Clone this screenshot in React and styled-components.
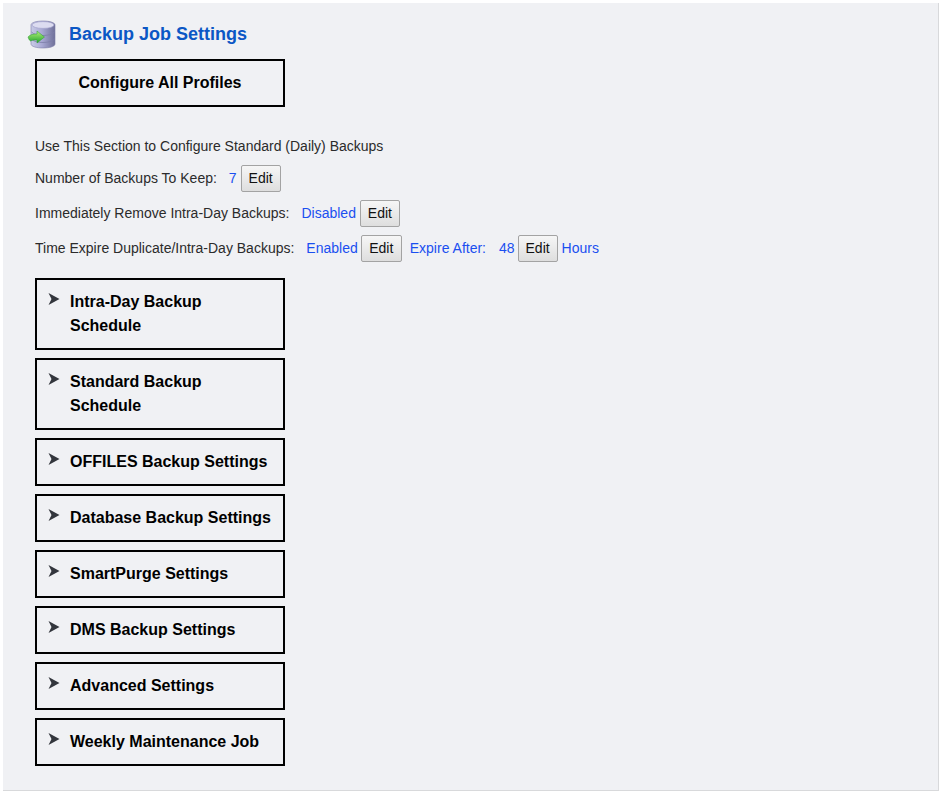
import React from 'react';
import styled, { createGlobalStyle } from 'styled-components';

const GlobalStyle = createGlobalStyle`
  html, body {
    margin: 0;
    padding: 0;
    background: #fff;
  }
  body {
    font-family: "Liberation Sans", Arial, sans-serif;
  }
`;

const Page = styled.div`
  width: 943px;
  height: 791px;
  padding: 3px 4px 0 3px;
  box-sizing: border-box;
`;

const Panel = styled.main`
  height: 788px;
  box-sizing: border-box;
  background: #f0f1f4;
  border-right: 1px solid #d8d9db;
  border-bottom: 1px solid #d8d9db;
  padding: 15px 0 0 24px;
`;

const TitleRow = styled.div`
  display: flex;
  align-items: center;
  height: 32px;
`;

const Title = styled.h2`
  margin: 0 0 0 12px;
  font-size: 18px;
  font-weight: bold;
  color: #0b57c5;
  line-height: 32px;
`;

const Content = styled.div`
  margin: 9px 0 0 8px;
`;

const ConfigureBox = styled.div`
  width: 250px;
  height: 48px;
  box-sizing: border-box;
  border: 2px solid #000;
  display: flex;
  align-items: center;
  justify-content: center;
  font-size: 16px;
  font-weight: bold;
  color: #000;
`;

const Settings = styled.section`
  margin-top: 27px;
  font-size: 14px;
  color: #2b2b2b;
`;

const Row = styled.div`
  display: flex;
  align-items: flex-start;
  height: 27px;
  line-height: 27px;
  margin-bottom: 8px;
`;

const Intro = styled(Row)`
  height: 24px;
  line-height: 24px;
  margin-bottom: 7px;
`;

const Value = styled.span`
  color: #1a4ff0;
  margin-left: ${(p) => p.$gap || 0}px;
`;

const EditButton = styled.button`
  width: ${(p) => p.$w || 40}px;
  height: 27px;
  margin-left: ${(p) => p.$gap || 4}px;
  padding: 0 0 2px;
  box-sizing: border-box;
  border: 1px solid #a3a3a3;
  border-radius: 2px;
  background: linear-gradient(#f6f6f6, #dedede);
  font-family: "Liberation Sans", Arial, sans-serif;
  font-size: 14px;
  color: #111;
`;

const Sections = styled.div`
  display: flex;
  flex-direction: column;
  gap: 8px;
  margin-top: 16px;
`;

const SectionBox = styled.div`
  width: 250px;
  box-sizing: border-box;
  border: 2px solid #000;
  padding: 10px 0 10px 11px;
  display: flex;
  align-items: flex-start;
`;

const Arrow = styled.svg`
  width: 12px;
  height: 12px;
  margin-top: 3px;
  flex: none;
`;

const SectionLabel = styled.div`
  width: 203px;
  margin-left: 10px;
  font-size: 16px;
  font-weight: bold;
  line-height: 24px;
  color: #000;
`;

const DbIcon = () => (
  <svg width="30" height="30" viewBox="0 0 30 30" aria-hidden="true">
    <defs>
      <linearGradient id="db" x1="0" x2="1" y1="0" y2="0">
        <stop offset="0" stopColor="#c9cbe6" />
        <stop offset="0.45" stopColor="#a9aad4" />
        <stop offset="1" stopColor="#6f7099" />
      </linearGradient>
      <linearGradient id="arr" x1="0" x2="0" y1="0" y2="1">
        <stop offset="0" stopColor="#b4f07a" />
        <stop offset="1" stopColor="#22a52e" />
      </linearGradient>
    </defs>
    <path d="M4 6c0-2.500 5.500-4 12-4s12 1.500 12 4v19c0 2.500-5.500 4-12 4S4 27.500 4 25z" fill="url(#db)" stroke="#7d7ea8" strokeWidth="0.6" />
    <ellipse cx="16" cy="6" rx="11" ry="3.400" fill="#dcdcf0" stroke="#9a9bc6" strokeWidth="0.6" />
    <path d="M4.500 13c2 2.500 7 3.500 11.500 3.500S25.500 15.500 27.500 13M4.500 20c2 2.500 7 3.500 11.500 3.500S25.500 22.500 27.500 20" fill="none" stroke="#7c7da8" strokeWidth="0.8" />
    <path d="M1 18C3 15.500 6 15 10 15V12L17.500 18L10 24V21C6.500 21 4 21.500 3.500 22C2 21 1.500 19.500 1 18z" fill="url(#arr)" stroke="#2d9a32" strokeWidth="0.5" />
  </svg>
);

const ArrowIcon = () => (
  <Arrow viewBox="0 0 12 12" aria-hidden="true">
    <path d="M0.500 0L11.500 6L0.500 12L3.500 6z" fill="#33363d" />
  </Arrow>
);

const sections = [
  { label: 'Intra-Day Backup Schedule' },
  { label: 'Standard Backup Schedule' },
  { label: 'OFFILES Backup Settings' },
  { label: 'Database Backup Settings' },
  { label: 'SmartPurge Settings' },
  { label: 'DMS Backup Settings' },
  { label: 'Advanced Settings' },
  { label: 'Weekly Maintenance Job' },
];

const App = () => (
  <>
    <GlobalStyle />
    <Page>
      <Panel>
        <TitleRow>
          <DbIcon />
          <Title>Backup Job Settings</Title>
        </TitleRow>
        <Content>
          <ConfigureBox>Configure All Profiles</ConfigureBox>
          <Settings>
            <Intro>Use This Section to Configure Standard (Daily) Backups</Intro>
            <Row>
              Number of Backups To Keep:
              <Value $gap={12}>7</Value>
              <EditButton>Edit</EditButton>
            </Row>
            <Row>
              Immediately Remove Intra-Day Backups:
              <Value $gap={12}>Disabled</Value>
              <EditButton>Edit</EditButton>
            </Row>
            <Row>
              Time Expire Duplicate/Intra-Day Backups:
              <Value $gap={12}>Enabled</Value>
              <EditButton $w={41} $gap={3}>Edit</EditButton>
              <Value $gap={8}>Expire After:</Value>
              <Value $gap={13}>48</Value>
              <EditButton $gap={3}>Edit</EditButton>
              <Value $gap={4}>Hours</Value>
            </Row>
          </Settings>
          <Sections>
            {sections.map((s) => (
              <SectionBox key={s.label}>
                <ArrowIcon />
                <SectionLabel>{s.label}</SectionLabel>
              </SectionBox>
            ))}
          </Sections>
        </Content>
      </Panel>
    </Page>
  </>
);

export default App;
